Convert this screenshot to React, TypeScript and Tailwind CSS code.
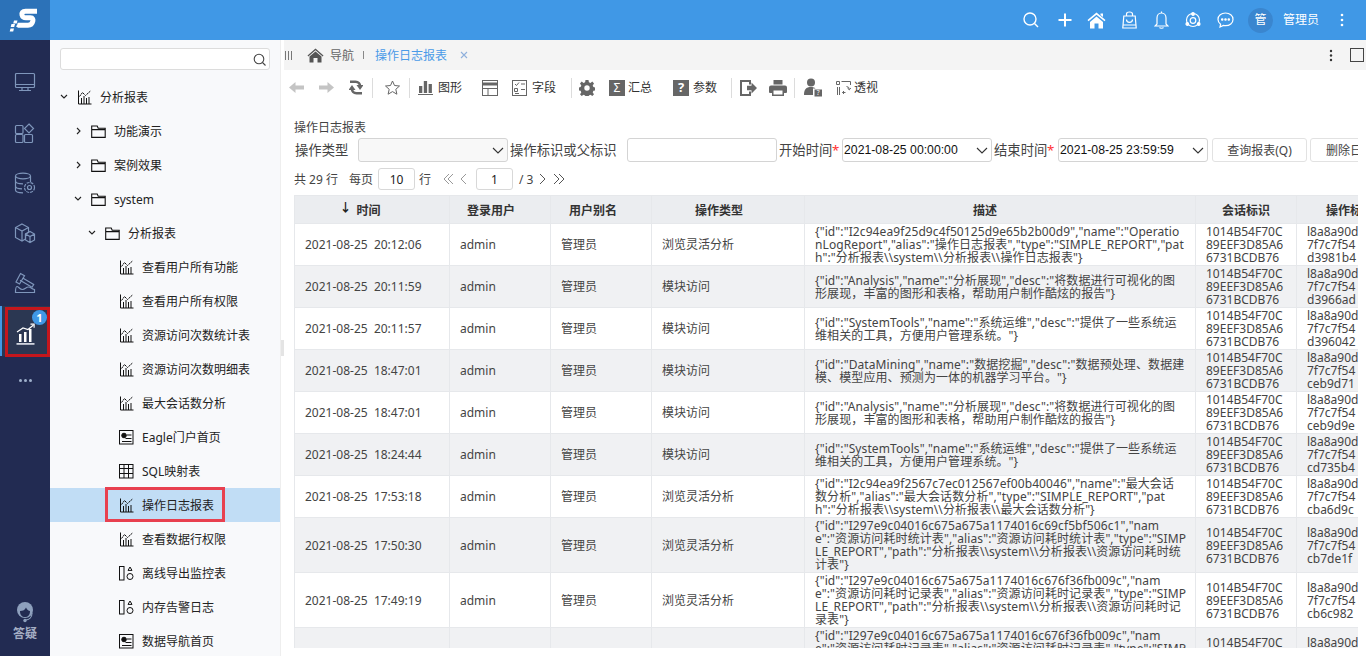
import React from "react";

const font = { fontFamily: '"Noto Sans", "Noto Sans CJK SC", sans-serif' };

function S({ size = 20, w, h, vb, stroke = "currentColor", sw = 1.2, fill = "none", className = "", children }: any) {
  return (
    <svg width={w ?? size} height={h ?? size} viewBox={vb ?? `0 0 ${w ?? size} ${h ?? size}`} fill={fill} stroke={stroke} strokeWidth={sw} className={"shrink-0 " + className}>
      {children}
    </svg>
  );
}

const Logo = () => (
  <svg width="50" height="40" viewBox="0 0 50 40">
    <path d="M37 11.300H25.500C22.500 11.300 21.500 13 22 15 C22.500 17 24 17.800 26 17.800H30.500C32.800 17.800 33.300 19.500 32.800 21.300 C32.300 23.500 31 25.200 28 25.200H17.500" fill="none" stroke="white" strokeWidth="5" />
    <path d="M14 20.500h3.500l-.8 3H13.200zM11.500 24h3.500l-.8 3h-3.500zM17 24.500h3l-.8 2.500h-3zM10.500 28.500h3.500l-.8 3H9.700z" fill="white" />
  </svg>
);

const IconMonitor = () => (
  <S size={22}>
    <rect x="1.500" y="1.500" width="19" height="14" rx="1" />
    <path d="M1.500 12.500h19M5 18.500h12M8 15.500v3M14 15.500v3" />
  </S>
);
const IconApps = () => (
  <S size={22}>
    <rect x="1.500" y="3.500" width="7.500" height="8" rx="1" />
    <rect x="1.500" y="12.500" width="7.500" height="8" rx="1" />
    <rect x="10.500" y="12.500" width="8" height="8" rx="1" />
    <path d="M15 2l4.500 4.500L15 11l-4.500-4.500z" />
  </S>
);
const IconDb = () => (
  <S size={22}>
    <ellipse cx="9" cy="4" rx="7.500" ry="2.800" />
    <path d="M1.500 4v14c0 1.600 3 2.800 7.500 2.800M1.500 9c0 1.600 3 2.800 7.500 2.800M1.500 14c0 1.600 3 2.800 6.500 2.800M16.500 4v6" />
    <circle cx="15.500" cy="15.500" r="2" />
    <circle cx="15.500" cy="15.500" r="5" strokeDasharray="3 1" />
  </S>
);
const IconCube = () => (
  <S size={22}>
    <path d="M8 2l6.500 3.500v5L11.500 12v5L8 19 1.500 15.500V5.500z" />
    <path d="M1.500 5.500L8 9l6.500-3.500M8 9v10" />
    <path d="M11.500 12l4.500-2.500L20.500 12v6L16 20.500 11.500 18zM11.500 12L16 14.500 20.500 12M16 14.500v6" />
  </S>
);
const IconHammer = () => (
  <S size={22}>
    <path d="M6.500 1.500l4 2.200-5 8.300-3.500-2z" />
    <path d="M8.700 6l11 6.500-1.700 2.800-12-7" />
    <path d="M1.500 20.500h19v-3c-2.500 0-3.500-2.500-6-2.500s-3.500 2.500-6 2.500-4-3-5.500-3c-1 0-1.500 2-1.500 6z" />
  </S>
);
const IconChartBig = () => (
  <S w={20} h={24}>
    <g stroke="none" fill="white">
      <rect x="3" y="12" width="2.500" height="8" />
      <rect x="8" y="10" width="2.500" height="10" />
      <rect x="13" y="7" width="2.500" height="13" />
      <rect x="0.500" y="21" width="18" height="1.800" fill="#cfd3dc" />
    </g>
    <path d="M1 10l6-4 5 1.500L17.500 3" stroke="white" strokeWidth="1.200" />
    <path d="M14.500 2.200h3.600v3.600" stroke="white" strokeWidth="1.200" />
  </S>
);

const IconTreeChart = () => (
  <S size={15} stroke="#111" sw={1}>
    <path d="M1.500 .5v13.500h13" />
    <path d="M4.500 14V8M7 14V6M9.500 14V8M12 14V7" />
    <path d="M2.500 6.500l3-4 3 3 5-4.500" strokeDasharray="2.200 .5" />
  </S>
);
const IconFolder = () => (
  <S w={15} h={13} stroke="#111" sw={1.100}>
    <path d="M.7 12.400V1h5.500l1 2.200h7v9.200zM.7 4.600h13.600" />
  </S>
);
const IconDashboard = () => (
  <S w={15} h={15} stroke="#111" sw={1}>
    <rect x=".5" y=".5" width="13.500" height="13.500" />
    <circle cx="5" cy="5.500" r="2.300" fill="#111" />
    <path d="M7.500 5h5M6.500 8.500h6M3 11.500h9.500" />
  </S>
);
const IconGrid = () => (
  <S w={15} h={15} stroke="#111" sw={1}>
    <rect x=".5" y=".5" width="13.500" height="13.500" />
    <path d="M.5 4.500h13.500M.5 9.500h13.500M5 .5v13.500M9.500 .5v13.500" />
  </S>
);
const IconShape = () => (
  <S w={15} h={15} stroke="#111" sw={1}>
    <rect x=".5" y=".5" width="4.500" height="13.500" />
    <path d="M11 1l2 3.400H9z" />
    <circle cx="11" cy="10.500" r="3" />
  </S>
);

const TreeRow = ({ indent, arrowW = 14, arrow, icon, label, active }: any) => (
  <div className={"flex h-[34px] items-center " + (active ? "bg-[#c1ddf5]" : "")} style={{ paddingLeft: indent }}>
    <span className="flex shrink-0 justify-start" style={{ width: arrowW }}>
      {arrow === "down" && (
        <S w={8} h={6} stroke="#222" sw={1.100}><path d="M1 1l3 3 3-3" /></S>
      )}
      {arrow === "right" && (
        <S w={6} h={8} stroke="#222" sw={1.100}><path d="M1 1l3 3-3 3" /></S>
      )}
    </span>
    {icon}
    <span className="ml-[8px] whitespace-nowrap pt-[2px] text-[12px] text-[#222]">{label}</span>
  </div>
);

const ToolSep = ({ className }: any) => <span className={"h-[20px] w-px shrink-0 bg-[#dcdcdc] " + className} />;
const TBLabel = ({ className, children }: any) => <span className={"shrink-0 text-[12px] text-[#333] " + className}>{children}</span>;

const rows = [
  { t: "2021-08-25  20:12:06", op: "浏览灵活分析", d: ['{"id":"I2c94ea9f25d9c4f50125d9e65b2b00d9","name":"Operatio', 'nLogReport","alias":"操作日志报表","type":"SIMPLE_REPORT","pat', 'h":"分析报表\\\\system\\\\分析报表\\\\操作日志报表"}'], k: "d3981b4" },
  { t: "2021-08-25  20:11:59", op: "模块访问", d: ['{"id":"Analysis","name":"分析展现","desc":"将数据进行可视化的图', '形展现，丰富的图形和表格，帮助用户制作酷炫的报告"}'], k: "d3966ad" },
  { t: "2021-08-25  20:11:57", op: "模块访问", d: ['{"id":"SystemTools","name":"系统运维","desc":"提供了一些系统运', '维相关的工具，方便用户管理系统。"}'], k: "d396042" },
  { t: "2021-08-25  18:47:01", op: "模块访问", d: ['{"id":"DataMining","name":"数据挖掘","desc":"数据预处理、数据建', '模、模型应用、预测为一体的机器学习平台。"}'], k: "ceb9d71" },
  { t: "2021-08-25  18:47:01", op: "模块访问", d: ['{"id":"Analysis","name":"分析展现","desc":"将数据进行可视化的图', '形展现，丰富的图形和表格，帮助用户制作酷炫的报告"}'], k: "ceb9d9e" },
  { t: "2021-08-25  18:24:44", op: "模块访问", d: ['{"id":"SystemTools","name":"系统运维","desc":"提供了一些系统运', '维相关的工具，方便用户管理系统。"}'], k: "cd735b4" },
  { t: "2021-08-25  17:53:18", op: "浏览灵活分析", d: ['{"id":"I2c94ea9f2567c7ec012567ef00b40046","name":"最大会话', '数分析","alias":"最大会话数分析","type":"SIMPLE_REPORT","pat', 'h":"分析报表\\\\system\\\\分析报表\\\\最大会话数分析"}'], k: "cba6d9c" },
  { t: "2021-08-25  17:50:30", op: "浏览灵活分析", d: ['{"id":"I297e9c04016c675a675a1174016c69cf5bf506c1","nam', 'e":"资源访问耗时统计表","alias":"资源访问耗时统计表","type":"SIMP', 'LE_REPORT","path":"分析报表\\\\system\\\\分析报表\\\\资源访问耗时统', '计表"}'], k: "cb7de1f" },
  { t: "2021-08-25  17:49:19", op: "浏览灵活分析", d: ['{"id":"I297e9c04016c675a675a1174016c676f36fb009c","nam', 'e":"资源访问耗时记录表","alias":"资源访问耗时记录表","type":"SIMP', 'LE_REPORT","path":"分析报表\\\\system\\\\分析报表\\\\资源访问耗时记', '录表"}'], k: "cb6c982" },
  { t: "", op: "", d: ['{"id":"I297e9c04016c675a675a1174016c676f36fb009c","nam', 'e":"资源访问耗时记录表","alias":"资源访问耗时记录表","type":"SIMP', 'LE_REPORT","path":"分析报表\\\\system\\\\分析报表\\\\资源访问耗时记', '录表"}'], k: "cb6c982" },
];

const headers = [
  { h: "时间", c: "pr-[24px] text-center" },
  { h: "登录用户", c: "pr-[18px] text-center" },
  { h: "用户别名", c: "pr-[16px] text-center" },
  { h: "操作类型", c: "pr-[18px] text-center" },
  { h: "描述", c: "pr-[30px] text-center" },
  { h: "会话标识", c: "text-center" },
  { h: "操作标识", c: "pl-[29px] text-left" },
];

const Chevron = () => (
  <S w={12} h={7} stroke="#333" sw={1.100}><path d="M1 1l5 5 5-5" /></S>
);

const Field = ({ className, children }: any) => (
  <div className={"flex h-[24px] shrink-0 items-center justify-between rounded-[3px] border border-[#d4d4d4] bg-white pl-[1px] pr-[3px] text-[12.25px] text-[#111] [font-family:'Liberation_Sans',sans-serif] " + className}>
    {children}
  </div>
);

export default function App() {
  return (
    <div className="flex h-[656px] w-[1366px] flex-col overflow-hidden bg-white" style={font}>
      {/* header */}
      <header className="flex h-[40px] shrink-0 items-center bg-[#4098e6] text-white">
        <div className="flex h-[40px] w-[50px] items-center justify-center bg-[#2c72b8]"><Logo /></div>
        <div className="ml-auto flex items-center">
          <S size={16} stroke="white" sw={1.400}><circle cx="7" cy="7" r="6" /><path d="M11.500 11.500l3.500 3.500" /></S>
          <S size={14} stroke="white" sw={2} className="ml-[19px]"><path d="M7 .5v13M.5 7h13" /></S>
          <S w={19} h={17} stroke="none" fill="white" className="ml-[15px]"><path d="M9.500 .5l9 7.500-1 1.200L9.500 2.800 1.500 9.200l-1-1.200zM3 10l6.500-5.500L16 10v6.500h-4.500v-5h-4v5H3zM13.500 1.500h2.500v3.500l-2.500-2z" /></S>
          <S w={15} h={18} stroke="white" sw={1.200} className="ml-[16px]"><path d="M1.800 5h11.400l1 12H.8zM4.500 5V3c0-1.300 1.300-2 3-2s3 .7 3 2v2M4.500 8.500c0 2 1.400 2.800 3 2.800s3-.8 3-2.800M1 14h13" /></S>
          <S w={15} h={18} stroke="white" sw={1.200} className="ml-[17px]"><path d="M3 13V7c0-3 2-5 4.500-5S12 4 12 7v6l2 2H1zM5.500 16.500c.5 1 3.500 1 4 0M7.500 .5V2" /></S>
          <S size={16} stroke="white" sw={1.200} className="ml-[16px]"><circle cx="8" cy="8" r="6.500" /><circle cx="8" cy="8.500" r="2.800" /><circle cx="8" cy="2" r="1.300" fill="white" /><circle cx="2.300" cy="12" r="1.300" fill="white" /><circle cx="13.700" cy="12" r="1.300" fill="white" /></S>
          <S w={17} h={16} stroke="white" sw={1.200} className="ml-[16px]"><path d="M8.500 1c4.200 0 7.500 2.700 7.500 6.400s-3.300 6.300-7.500 6.300c-.8 0-1.400-.1-2.100-.3L3 15l.6-2.800C2 11 1 9.400 1 7.400 1 3.700 4.300 1 8.500 1z" /><circle cx="5.200" cy="7.500" r=".7" fill="white" /><circle cx="8.500" cy="7.500" r=".7" fill="white" /><circle cx="11.800" cy="7.500" r=".7" fill="white" /></S>
          <div className="ml-[14px] flex h-[25px] w-[25px] items-center justify-center rounded-full bg-[#3a86cf] text-[12px]">管</div>
          <span className="ml-[10px] text-[12px]">管理员</span>
          <S w={4} h={14} stroke="none" fill="white" className="ml-[21px] mr-[22px]"><circle cx="2" cy="2" r="1.300" /><circle cx="2" cy="7" r="1.300" /><circle cx="2" cy="12" r="1.300" /></S>
        </div>
      </header>

      <div className="flex min-h-0 flex-1">
        {/* dark rail */}
        <aside className="flex w-[50px] shrink-0 flex-col items-center bg-[#222b52] pt-[18px] text-[#7f96bb]">
          <div className="flex h-[50px] w-full shrink-0 items-center justify-center"><IconMonitor /></div>
          <div className="flex h-[50px] w-full shrink-0 items-center justify-center"><IconApps /></div>
          <div className="flex h-[50px] w-full shrink-0 items-center justify-center"><IconDb /></div>
          <div className="flex h-[50px] w-full shrink-0 items-center justify-center"><IconCube /></div>
          <div className="flex h-[50px] w-full shrink-0 items-center justify-center"><IconHammer /></div>
          <div className="relative -mt-[2px] flex h-[50px] w-full shrink-0 items-center justify-center border-l-2 border-[#4098e6] bg-[#2b3752] pt-[5px]">
            <div className="absolute left-[3px] top-[1px] h-[50px] w-[45px] border-[3px] border-[#c4161c]" />
            <IconChartBig />
            <span className="absolute left-[30px] top-[4px] flex h-[15px] w-[15px] items-center justify-center rounded-full bg-[#4098e6] text-[11px] font-bold leading-none text-white">1</span>
          </div>
          <div className="mt-[23px] flex gap-[2px]">
            <i className="h-[3px] w-[3px] rounded-full bg-[#9fb0cc]" />
            <i className="h-[3px] w-[3px] rounded-full bg-[#9fb0cc]" />
            <i className="h-[3px] w-[3px] rounded-full bg-[#9fb0cc]" />
          </div>
          <div className="mb-[15px] mt-auto flex flex-col items-center">
            <S w={20} h={23} stroke="none" fill="#8ea0bd">
              <circle cx="10" cy="9" r="8" />
              <path d="M5 10c3 0 5-1 6-3.500 1 2 2.500 3.500 4 3.500 0 4-2 6-5 6s-5-2-5-6z" fill="#222b52" />
              <path d="M17 12c0 4.500-3 7-6.500 7" fill="none" stroke="#8ea0bd" strokeWidth="1.200" />
              <circle cx="10" cy="19.500" r="1.700" />
            </S>
            <span className="mt-[2px] text-[12px] font-semibold leading-[15px] text-[#a5aec4]">答疑</span>
          </div>
        </aside>

        {/* tree */}
        <nav className="relative flex w-[230px] shrink-0 flex-col overflow-hidden bg-[#f8f9fb]">
          <div className="mx-[10px] mt-[8px] flex h-[22px] shrink-0 items-center justify-end rounded-[3px] border border-[#dcdcdc] bg-white pr-[3px]">
            <S size={13} stroke="#444" sw={1.100}><circle cx="6" cy="6" r="4.800" /><path d="M9.500 9.500l3 3" /></S>
          </div>
          <div className="mt-[10px] shrink-0">
            <TreeRow indent={10} arrowW={17} arrow="down" icon={<IconTreeChart />} label="分析报表" />
            <TreeRow indent={26} arrowW={15} arrow="right" icon={<IconFolder />} label="功能演示" />
            <TreeRow indent={26} arrowW={15} arrow="right" icon={<IconFolder />} label="案例效果" />
            <TreeRow indent={24} arrowW={17} arrow="down" icon={<IconFolder />} label="system" />
            <TreeRow indent={38} arrowW={17} arrow="down" icon={<IconFolder />} label="分析报表" />
            {["查看用户所有功能", "查看用户所有权限", "资源访问次数统计表", "资源访问次数明细表", "最大会话数分析"].map((l) => (
              <TreeRow key={l} indent={55} icon={<IconTreeChart />} label={l} />
            ))}
            <TreeRow indent={55} icon={<IconDashboard />} label="Eagle门户首页" />
            <TreeRow indent={55} icon={<IconGrid />} label="SQL映射表" />
            <div className="relative">
              <TreeRow indent={55} icon={<IconTreeChart />} label="操作日志报表" active />
              <div className="absolute left-[55px] top-[-1px] h-[35px] w-[120px] border-[3px] border-[#e8404f]" />
            </div>
            <TreeRow indent={55} icon={<IconTreeChart />} label="查看数据行权限" />
            <TreeRow indent={55} icon={<IconShape />} label="离线导出监控表" />
            <TreeRow indent={55} icon={<IconShape />} label="内存告警日志" />
            <TreeRow indent={55} icon={<IconDashboard />} label="数据导航首页" />
          </div>
        </nav>

        {/* splitter */}
        <div className="flex w-[4px] shrink-0 items-center border-l border-[#eeeeee] bg-white">
          <span className="h-[16px] w-[3px] bg-[#e4e4e4]" />
        </div>

        {/* main */}
        <main className="flex min-w-0 flex-1 flex-col">
          <div className="flex h-[30px] shrink-0 items-center bg-[#f4f4f4] pl-[1px]">
            <S w={7} h={9} stroke="#777" sw={1}><path d="M.500 0v9M3.500 0v9M6.500 0v9" /></S>
            <S w={17} h={15} stroke="none" fill="#555" className="ml-[15px]"><path d="M8.500 .5l8 7-.8.9L8.500 2.300 1.300 8.400.500 7.500zM2.500 8.500L8.500 3.500l6 5v6H10.500V10h-4v4.500H2.500z" /></S>
            <span className="ml-[6px] pt-[2px] text-[12px] text-[#666]">导航</span>
            <span className="ml-[9px] h-[8px] w-px bg-[#888]" />
            <span className="ml-[11px] pt-[2px] text-[12px] text-[#4a9be8]">操作日志报表</span>
            <S size={8} stroke="#8fb0dc" sw={1.100} className="ml-[13px]"><path d="M1 1l6 6M7 1L1 7" /></S>
            <S w={4} h={13} stroke="none" fill="#333" className="ml-auto"><circle cx="2" cy="2" r="1.200" /><circle cx="2" cy="6.500" r="1.200" /><circle cx="2" cy="11" r="1.200" /></S>
            <span className="ml-[17px] mr-[2px] h-[14px] w-[14px] border-[1.500px] border-[#444]" />
          </div>

          {/* toolbar */}
          <div className="flex h-[35px] shrink-0 items-center pl-[5px] text-[#666]">
            <S w={15} h={13} stroke="none" fill="#c4c4c4"><path d="M0 6.500l6.500-5.500v3.500H15v4H6.500V12z" /></S>
            <S w={15} h={13} stroke="none" fill="#c4c4c4" className="ml-[15px]"><path d="M15 6.500L8.500 1v3.500H0v4h8.500V12z" /></S>
            <S w={14} h={17} stroke="#666" sw={2.600} className="ml-[15px]">
              <path d="M1 2.800h5.500c3 0 4.500 2 4.500 4.200" />
              <path d="M7.500 6h7l-3.500 5z" fill="#666" stroke="none" />
              <path d="M13 14.200H7.500c-3 0-4.500-2-4.500-4.200" />
              <path d="M-.5 11h7L3 6z" fill="#666" stroke="none" />
            </S>
            <ToolSep className="ml-[9px]" />
            <S size={15} stroke="#666" sw={1} className="ml-[12px]"><path d="M7.500 1l2 4.500 5 .5-3.700 3.300 1.100 4.900-4.400-2.600-4.400 2.600 1.100-4.900L.5 6l5-.5z" /></S>
            <ToolSep className="ml-[9px]" />
            <S w={15} h={15} stroke="none" fill="#666" className="ml-[8px]"><rect x="1" y="6" width="3.300" height="7" /><rect x="5.800" y="1" width="3.300" height="12" /><rect x="10.600" y="4" width="3.300" height="9" /><rect x="0" y="14" width="15" height="1" /></S>
            <TBLabel className="ml-[5px]">图形</TBLabel>
            <S w={16} h={16} stroke="#666" sw={1} className="ml-[20px]"><rect x=".5" y=".5" width="15" height="15" /><path d="M.5 4h15" strokeWidth="3" /><path d="M.5 8.500h15M6 8.500v7" /></S>
            <S w={15} h={16} stroke="#666" sw={1} className="ml-[14px]"><rect x=".5" y=".5" width="14" height="15" /><path d="M3 4l1.500 1.500L7 2.500M9 4h4M2.500 8.500h3v3h-3zM9 9.500h4M3 13.500h4" /></S>
            <TBLabel className="ml-[5px]">字段</TBLabel>
            <ToolSep className="ml-[15px]" />
            <S size={16} stroke="none" fill="#666" className="ml-[7px]"><path fillRule="evenodd" d="M6.500 0h3l.4 2.200 1.600.7L13.300 1.600 15 3.600 13.700 5.400l.7 1.600 1.600.4v3l-1.600.4-.7 1.600 1.300 1.800-1.700 1.800-1.800-1.200-1.600.7-.4 2.200h-3l-.4-2.200-1.600-.7-1.800 1.200-1.700-1.800 1.300-1.800-.7-1.600L0 10.400v-3l1.600-.4.700-1.600L1 3.600 2.700 1.600 4.500 2.900l1.600-.7zM8 5.300a2.700 2.700 0 1 0 0 5.400 2.700 2.700 0 0 0 0-5.400z" /></S>
            <span className="ml-[14px] flex h-[16px] w-[16px] shrink-0 items-center justify-center bg-[#666] text-[12px] leading-none text-white">Σ</span>
            <TBLabel className="ml-[3px]">汇总</TBLabel>
            <span className="ml-[21px] flex h-[16px] w-[16px] shrink-0 items-center justify-center bg-[#666] text-[13px] font-bold leading-none text-white">?</span>
            <TBLabel className="ml-[4px]">参数</TBLabel>
            <ToolSep className="ml-[14px]" />
            <S w={17} h={16} stroke="none" fill="#666" className="ml-[8px]"><path d="M0 0h11v4.500H9V2H2v12h7v-2.500h2V16H0z" /><path d="M7 5.800h4.500V2.500L17 8l-5.500 5.500v-3.300H7z" /></S>
            <S w={18} h={16} stroke="none" fill="#666" className="ml-[12px]"><path fillRule="evenodd" d="M4.500 0h9v4.500h-9zM2 5.500h14a2 2 0 0 1 2 2v4.500a1 1 0 0 1-1 1h-2v3H3v-3H1a1 1 0 0 1-1-1V7.500a2 2 0 0 1 2-2zM4.500 10.500v4h9v-4z" /></S>
            <ToolSep className="ml-[7px]" />
            <S w={18} h={19} stroke="none" fill="#666" className="ml-[9px]"><circle cx="7" cy="4.500" r="4" /><path d="M0 17c0-5.500 2-8 7-8 2 0 3.500.5 4.500 1.500H9v6.500z" /><rect x="10.500" y="11.500" width="7.500" height="7" /><text x="14.200" y="17.300" fontSize="6.500" fill="white" textAnchor="middle">?</text></S>
            <S w={15} h={16} stroke="#666" sw={1} className="ml-[14px]"><path d="M.5 1.500h3v3h-3zM5.500 1.500h9v3.500M1.500 7v8M3.500 7v8M10.500 6.500a3 3 0 0 1 2.800 3M15 7.800l-1.700 2-1.800-1.700M9.500 12.500H6.500M8 11l-1.500 1.500L8 14" /></S>
            <TBLabel className="ml-[3px]">透视</TBLabel>
          </div>

          {/* report */}
          <div className="mb-[8px] ml-[10px] mr-[8px] flex min-h-0 flex-1 flex-col overflow-hidden">
            <div className="mt-[15px] h-[16px] shrink-0 text-[12px] leading-[16px] text-[#444]">操作日志报表</div>
            <div className="mt-[1px] flex h-[26px] shrink-0 items-center whitespace-nowrap text-[13.330px] text-[#444]">
              <span className="ml-[1px] w-[63px] shrink-0 pt-[2px]">操作类型</span>
              <Field className="w-[150px] justify-end !bg-[#f8f8f8]"><Chevron /></Field>
              <span className="ml-[2px] w-[117px] shrink-0 pt-[2px]">操作标识或父标识</span>
              <Field className="w-[150px]" />
              <span className="ml-[2px] w-[53px] shrink-0 pt-[2px]">开始时间</span>
              <span className="w-[10px] shrink-0 pt-[2px] text-[#f33]">*</span>
              <Field className="w-[150px]"><span>2021-08-25 00:00:00</span><Chevron /></Field>
              <span className="ml-[2px] w-[53px] shrink-0 pt-[2px]">结束时间</span>
              <span className="w-[11px] shrink-0 pt-[2px] text-[#f33]">*</span>
              <Field className="w-[150px]"><span>2021-08-25 23:59:59</span><Chevron /></Field>
              <span className="ml-[4px] flex h-[24px] w-[95px] shrink-0 items-center justify-center rounded-[3px] border border-[#e2e2e2] pt-[2px] text-[12px]">查询报表(Q)</span>
              <span className="ml-[3px] flex h-[24px] w-[95px] shrink-0 items-center rounded-[3px] border border-[#e2e2e2] pl-[15px] pt-[2px] text-[12px]">删除日志</span>
            </div>
            <div className="flex h-[32px] shrink-0 items-center whitespace-nowrap text-[12px] text-[#444]">
              <span className="w-[45px] shrink-0 pt-[2px]">共 29 行</span>
              <span className="ml-[10px] pt-[2px]">每页</span>
              <span className="ml-[5px] flex h-[22px] w-[37px] items-center justify-center rounded-[3px] border border-[#d8d8d8] pt-[1px] text-[#222]">10</span>
              <span className="ml-[4px] pt-[2px]">行</span>
              <S w={12} h={12} stroke="#999" sw={1} className="ml-[12px]"><path d="M6 1L1 6l5 5M10 1L5 6l5 5" /></S>
              <S w={7} h={12} stroke="#999" sw={1} className="ml-[5px]"><path d="M6 1L1 6l5 5" /></S>
              <span className="ml-[9px] flex h-[22px] w-[37px] items-center justify-center rounded-[3px] border border-[#d8d8d8] pt-[1px] text-[#222]">1</span>
              <span className="ml-[6px] w-[14px] shrink-0 pt-[2px]">/ 3</span>
              <S w={7} h={12} stroke="#555" sw={1} className="ml-[6px]"><path d="M1 1l5 5-5 5" /></S>
              <S w={12} h={12} stroke="#555" sw={1} className="ml-[7px]"><path d="M1 1l5 5-5 5M6 1l5 5-5 5" /></S>
            </div>

            <div className="min-h-0 flex-1 overflow-hidden">
              <table className="w-[1100px] table-fixed border-collapse text-[12px] leading-[13px] text-[#444]">
                <colgroup>
                  <col className="w-[155px]" /><col className="w-[101px]" /><col className="w-[101px]" /><col className="w-[153px]" /><col className="w-[391px]" /><col className="w-[101px]" /><col className="w-[98px]" />
                </colgroup>
                <thead>
                  <tr className="h-[28px] bg-[#ebedf0] text-[#333]">
                    {headers.map((x, i) => (
                      <th key={x.h} className={"overflow-hidden whitespace-nowrap border border-[#e6e8eb] pt-[2px] font-semibold " + x.c}>
                        {i === 0 && <span className="relative top-[-3px] mr-[5px] text-[#222]">↓</span>}
                        {x.h}
                      </th>
                    ))}
                  </tr>
                </thead>
                <tbody>
                  {rows.map((r, i) => (
                    <tr key={i} className={i % 2 ? "bg-[#f0f1f3]" : "bg-white"}>
                      <td className="whitespace-pre border border-[#e6e8eb] pl-[10px]">{r.t}</td>
                      <td className="border border-[#e6e8eb] pl-[10px]">{r.t && "admin"}</td>
                      <td className="border border-[#e6e8eb] pl-[10px]">{r.t && "管理员"}</td>
                      <td className="border border-[#e6e8eb] pl-[10px]">{r.op}</td>
                      <td className="whitespace-nowrap border border-[#e6e8eb] py-[1px] pl-[10px] tracking-[0.1px]">
                        {r.d.map((l, j) => <div key={j}>{l}</div>)}
                      </td>
                      <td className="whitespace-nowrap border border-[#e6e8eb] py-[1px] pl-[10px]">
                        <div>1014B54F70C</div><div>89EEF3D85A6</div><div>6731BCDB76</div>
                      </td>
                      <td className="overflow-hidden whitespace-nowrap border border-[#e6e8eb] py-[1px] pl-[10px]">
                        <div>l8a8a90d</div><div>7f7c7f54</div><div>{r.k}</div>
                      </td>
                    </tr>
                  ))}
                </tbody>
              </table>
            </div>
          </div>
        </main>
      </div>
    </div>
  );
}
